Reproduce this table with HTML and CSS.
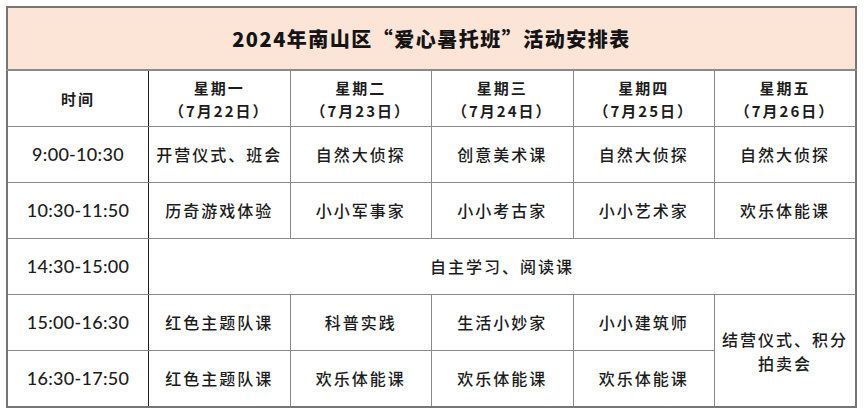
FILE: index.html
```html
<!DOCTYPE html>
<html lang="zh-CN">
<head>
<meta charset="utf-8">
<title>2024年南山区“爱心暑托班”活动安排表</title>
<link rel="stylesheet" href="styles.css">
</head>
<body>
<div class="page">
<table class="schedule">
  <colgroup>
    <col class="c-time"><col><col><col><col><col>
  </colgroup>
  <thead>
    <tr class="title-row"><th colspan="6" class="title">2024年南山区“爱心暑托班”活动安排表</th></tr>
    <tr class="head-row">
      <th class="time">时间</th>
      <th>星期一<br>（7月22日）</th>
      <th>星期二<br>（7月23日）</th>
      <th>星期三<br>（7月24日）</th>
      <th>星期四<br>（7月25日）</th>
      <th>星期五<br>（7月26日）</th>
    </tr>
  </thead>
  <tbody>
    <tr>
      <td class="time">9:00-10:30</td>
      <td>开营仪式、班会</td><td>自然大侦探</td><td>创意美术课</td><td>自然大侦探</td><td>自然大侦探</td>
    </tr>
    <tr>
      <td class="time">10:30-11:50</td>
      <td>历奇游戏体验</td><td>小小军事家</td><td>小小考古家</td><td>小小艺术家</td><td>欢乐体能课</td>
    </tr>
    <tr>
      <td class="time">14:30-15:00</td>
      <td colspan="5">自主学习、阅读课</td>
    </tr>
    <tr>
      <td class="time">15:00-16:30</td>
      <td>红色主题队课</td><td>科普实践</td><td>生活小妙家</td><td>小小建筑师</td>
      <td rowspan="2" class="multi">结营仪式、积分<br>拍卖会</td>
    </tr>
    <tr>
      <td class="time">16:30-17:50</td>
      <td>红色主题队课</td><td>欢乐体能课</td><td>欢乐体能课</td><td>欢乐体能课</td>
    </tr>
  </tbody>
</table>
</div>
</body>
</html>
```

FILE: styles.css
```css
html, body {
  margin: 0;
  padding: 0;
  background: #ffffff;
}

.page {
  padding: 6px 7px 6px 6px;
}

.schedule {
  width: 851px;
  table-layout: fixed;
  border-collapse: collapse;
  border: 2px solid #767676;
  font-family: "Noto Sans CJK SC", "Noto Sans", sans-serif;
  color: #1c1c1c;
}

.schedule th,
.schedule td {
  border: 1px solid #8a8a8a;
  text-align: center;
  vertical-align: middle;
  padding: 0;
  font-size: 16px;
  font-weight: 500;
  letter-spacing: 2px;
  line-height: 23px;
}

.schedule .title-row th {
  height: 61px;
  background: #fce5d7;
  font-size: 20px;
  font-weight: 900;
  letter-spacing: 1.5px;
  color: #141414;
  border-bottom: 2px solid #8a8a8a;
}

.head-row th {
  height: 55px;
  font-weight: 700;
  font-size: 15px;
}

.schedule tbody td {
  height: 55px;
}

.schedule .time {
  border-right: 1px solid #1e1e1e;
}

.schedule td.time {
  font-family: "Lato", "Noto Sans", sans-serif;
  font-size: 18px;
  letter-spacing: 0.3px;
  font-weight: 500;
}

.schedule .multi {
  line-height: 24px;
}
```
